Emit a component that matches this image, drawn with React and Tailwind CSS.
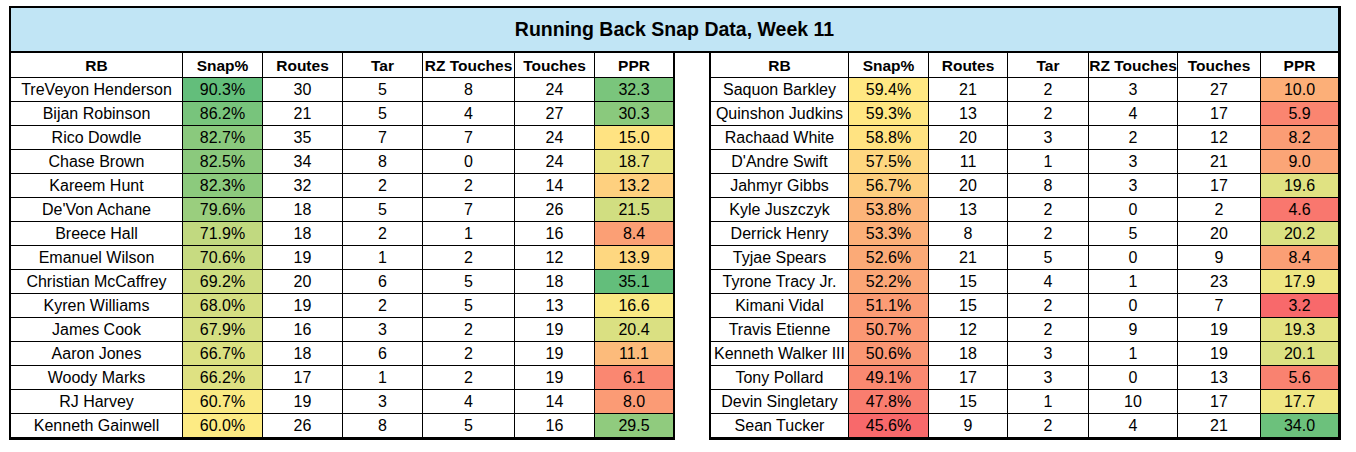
import React from "react";

const leftRows = [
  ["TreVeyon Henderson", 90.3, 30, 5, 8, 24, 32.3],
  ["Bijan Robinson", 86.2, 21, 5, 4, 27, 30.3],
  ["Rico Dowdle", 82.7, 35, 7, 7, 24, 15.0],
  ["Chase Brown", 82.5, 34, 8, 0, 24, 18.7],
  ["Kareem Hunt", 82.3, 32, 2, 2, 14, 13.2],
  ["De'Von Achane", 79.6, 18, 5, 7, 26, 21.5],
  ["Breece Hall", 71.9, 18, 2, 1, 16, 8.4],
  ["Emanuel Wilson", 70.6, 19, 1, 2, 12, 13.9],
  ["Christian McCaffrey", 69.2, 20, 6, 5, 18, 35.1],
  ["Kyren Williams", 68.0, 19, 2, 5, 13, 16.6],
  ["James Cook", 67.9, 16, 3, 2, 19, 20.4],
  ["Aaron Jones", 66.7, 18, 6, 2, 19, 11.1],
  ["Woody Marks", 66.2, 17, 1, 2, 19, 6.1],
  ["RJ Harvey", 60.7, 19, 3, 4, 14, 8.0],
  ["Kenneth Gainwell", 60.0, 26, 8, 5, 16, 29.5],
];

const rightRows = [
  ["Saquon Barkley", 59.4, 21, 2, 3, 27, 10.0],
  ["Quinshon Judkins", 59.3, 13, 2, 4, 17, 5.9],
  ["Rachaad White", 58.8, 20, 3, 2, 12, 8.2],
  ["D'Andre Swift", 57.5, 11, 1, 3, 21, 9.0],
  ["Jahmyr Gibbs", 56.7, 20, 8, 3, 17, 19.6],
  ["Kyle Juszczyk", 53.8, 13, 2, 0, 2, 4.6],
  ["Derrick Henry", 53.3, 8, 2, 5, 20, 20.2],
  ["Tyjae Spears", 52.6, 21, 5, 0, 9, 8.4],
  ["Tyrone Tracy Jr.", 52.2, 15, 4, 1, 23, 17.9],
  ["Kimani Vidal", 51.1, 15, 2, 0, 7, 3.2],
  ["Travis Etienne", 50.7, 12, 2, 9, 19, 19.3],
  ["Kenneth Walker III", 50.6, 18, 3, 1, 19, 20.1],
  ["Tony Pollard", 49.1, 17, 3, 0, 13, 5.6],
  ["Devin Singletary", 47.8, 15, 1, 10, 17, 17.7],
  ["Sean Tucker", 45.6, 9, 2, 4, 21, 34.0],
];

const headers = ["RB", "Snap%", "Routes", "Tar", "RZ Touches", "Touches", "PPR"];

// excel style 3-colour scale: red -> yellow (50th pct) -> green
const RED = [248, 105, 107];
const YELLOW = [255, 235, 132];
const GREEN = [99, 190, 123];

function makeScale(values) {
  const sorted = [...values].sort((a, b) => a - b);
  const pos = 0.5 * (sorted.length - 1);
  const lo = Math.floor(pos);
  const mid = sorted[lo] + (sorted[lo + 1] - sorted[lo]) * (pos - lo);
  const min = sorted[0];
  const max = sorted[sorted.length - 1];
  return (v) => {
    let from, to, t;
    if (v <= mid) {
      from = RED;
      to = YELLOW;
      t = (v - min) / (mid - min);
    } else {
      from = YELLOW;
      to = GREEN;
      t = (v - mid) / (max - mid);
    }
    const c = from.map((f, i) => Math.round(f + (to[i] - f) * t));
    return `rgb(${c[0]}, ${c[1]}, ${c[2]})`;
  };
}

const all = [...leftRows, ...rightRows];
const snapColor = makeScale(all.map((r) => r[1]));
const pprColor = makeScale(all.map((r) => r[6]));

function SnapTable({ rows, cols, className }) {
  return (
    <div className={className}>
      <div className={`grid ${cols} grid-rows-[24px_repeat(15,23px)] gap-px bg-black`}>
        {headers.map((h) => (
          <div
            key={h}
            className="bg-white flex items-center justify-center pt-[2px] text-[15.5px] font-bold whitespace-nowrap"
          >
            {h}
          </div>
        ))}
        {rows.map((r) => (
          <React.Fragment key={r[0]}>
            <div className="bg-white flex items-center justify-center whitespace-nowrap">{r[0]}</div>
            <div
              className="flex items-center justify-center"
              style={{ backgroundColor: snapColor(r[1]) }}
            >
              {r[1].toFixed(1)}%
            </div>
            <div className="bg-white flex items-center justify-center">{r[2]}</div>
            <div className="bg-white flex items-center justify-center">{r[3]}</div>
            <div className="bg-white flex items-center justify-center">{r[4]}</div>
            <div className="bg-white flex items-center justify-center">{r[5]}</div>
            <div
              className="flex items-center justify-center"
              style={{ backgroundColor: pprColor(r[6]) }}
            >
              {r[6].toFixed(1)}
            </div>
          </React.Fragment>
        ))}
      </div>
    </div>
  );
}

export default function App() {
  return (
    <div className="bg-white w-[1356px] h-[452px] pt-[6px] pl-[9px] font-['Liberation_Sans',Arial,sans-serif] text-[16px] text-black">
      <div className="w-[1332px]">
        <div className="h-[47px] border-t-2 border-l-2 border-r-[3px] border-b-2 border-black bg-[#C1E5F5] flex items-center justify-center text-[19.5px] font-bold">
          Running Back Snap Data, Week 11
        </div>
        <div className="flex">
          <SnapTable
            rows={leftRows}
            cols="grid-cols-[171px_79px_79px_79px_91px_79px_78px]"
            className="w-[666px] border-l-2 border-r-2 border-b-[3px] border-black"
          />
          <div className="w-[34px]" />
          <SnapTable
            rows={rightRows}
            cols="grid-cols-[137px_79px_78px_80px_88px_82px_77px]"
            className="w-[632px] border-l-2 border-r-[3px] border-b-[3px] border-black"
          />
        </div>
      </div>
    </div>
  );
}
